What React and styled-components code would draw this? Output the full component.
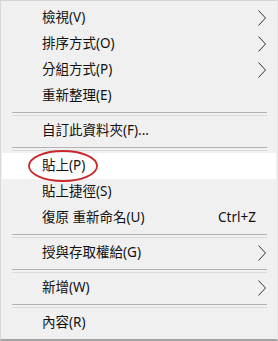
import React from "react";
import styled, { createGlobalStyle } from "styled-components";

const Global = createGlobalStyle`
  html, body { margin: 0; padding: 0; background: #f0f0f0; }
  * { box-sizing: border-box; }
`;

const Menu = styled.div`
  width: 278px;
  height: 341px;
  background: #f0f0f0;
  border-top: 1px solid #d4d4d4;
  border-left: 1px solid #d8d8d8;
  border-right: 1px solid #e6e6e6;
  border-bottom: 2px solid #a3a3a3;
  padding-top: 4px;
  font-family: "Segoe UI", "Noto Sans", "Noto Sans CJK TC", sans-serif;
  font-size: 13.5px;
  color: #111;
  display: flex;
  flex-direction: column;
`;

const Row = styled.div`
  position: relative;
  display: flex;
  align-items: center;
  height: 26px;
  margin: 0 1px;
  padding: 0 10px 0 40px;
  background: ${(p) => (p.$active ? "#ffffff" : "transparent")};
  white-space: nowrap;
`;

const Label = styled.span`
  flex: 1;
  line-height: 1;
`;

const Shortcut = styled.span`
  line-height: 1;
`;

const End = styled.span`
  width: 10px;
  height: 16px;
  display: flex;
  justify-content: flex-end;
`;

const Sep = styled.div`
  height: 9px;
  display: flex;
  align-items: center;
  padding: 0 10px 0 11px;
  &::before {
    content: "";
    flex: 1;
    height: 2px;
    border-top: 1px solid #b3b3b3;
    border-bottom: 1px solid #dadada;
  }
`;

const Circle = styled.svg`
  position: absolute;
  left: 26px;
  top: -3px;
  overflow: visible;
`;

const Chevron = () => (
  <svg width="8" height="16" viewBox="0 0 8 16">
    <path d="M0.5 0.5 L7.5 8 L0.5 15.5" fill="none" stroke="#333" strokeWidth="1" />
  </svg>
);

const items = [
  { label: "檢視(V)", sub: true },
  { label: "排序方式(O)", sub: true },
  { label: "分組方式(P)", sub: true },
  { label: "重新整理(E)" },
  { sep: true },
  { label: "自訂此資料夾(F)..." },
  { sep: true },
  { label: "貼上(P)", active: true },
  { label: "貼上捷徑(S)" },
  { label: "復原 重新命名(U)", shortcut: "Ctrl+Z" },
  { sep: true },
  { label: "授與存取權給(G)", sub: true },
  { sep: true },
  { label: "新增(W)", sub: true },
  { sep: true },
  { label: "內容(R)" },
];

export default function App() {
  return (
    <>
      <Global />
      <Menu>
        {items.map((it, i) =>
          it.sep ? (
            <Sep key={i} />
          ) : (
            <Row key={i} $active={it.active}>
              <Label>{it.label}</Label>
              {it.shortcut && <Shortcut>{it.shortcut}</Shortcut>}
              <End>{it.sub && <Chevron />}</End>
              {it.active && (
                <Circle width="70" height="32" viewBox="0 0 70 32">
                  <ellipse cx="35" cy="16" rx="34" ry="15" fill="none" stroke="#c8282b" strokeWidth="1.8" />
                </Circle>
              )}
            </Row>
          )
        )}
      </Menu>
    </>
  );
}
